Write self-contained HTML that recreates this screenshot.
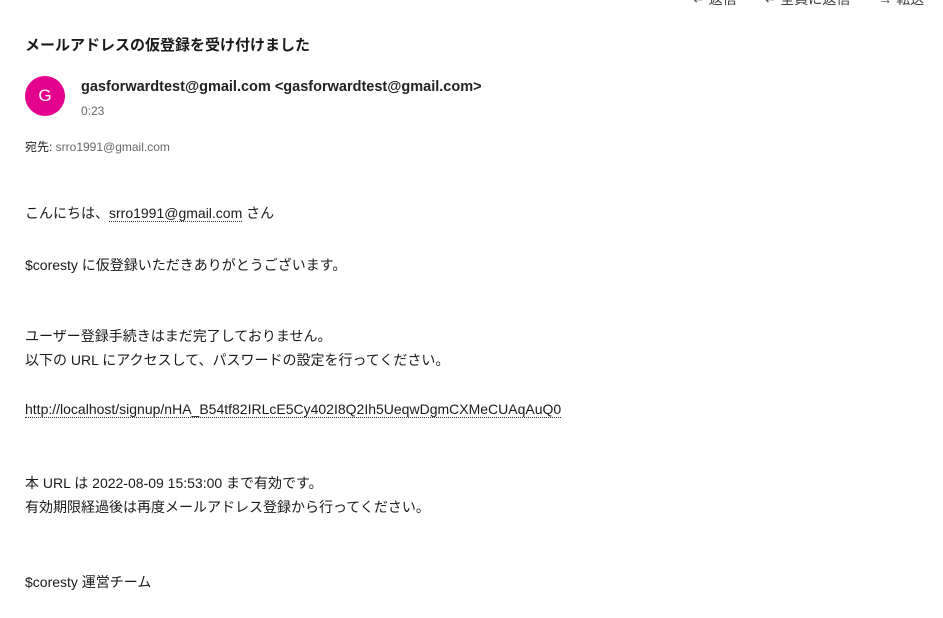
<!DOCTYPE html>
<html><head><meta charset="utf-8"><style>
body{margin:0;width:943px;height:618px;background:#fff;overflow:hidden;font-family:"Liberation Sans","Noto Sans CJK JP",sans-serif;color:#1a1a1a;position:relative}
.a{position:absolute;white-space:nowrap}
.u{border-bottom:1px dotted #333}
.b{font-size:14px}
</style></head><body>
<div class="a" style="left:693px;top:-11px;font-size:14px;color:#444">↩ 返信　　↩ 全員に返信　　→ 転送</div>
<div class="a" style="left:25px;top:34px;font-size:15px;font-weight:bold">メールアドレスの仮登録を受け付けました</div>
<div class="a" style="left:25px;top:76px;width:40px;height:40px;border-radius:50%;background:#e3008c;color:#fff;font-size:17px;line-height:40px;text-align:center">G</div>
<div class="a" style="left:81px;top:79px;font-size:14.5px;font-weight:600;color:#222">gasforwardtest@gmail.com &lt;gasforwardtest@gmail.com&gt;</div>
<div class="a" style="left:81px;top:104px;font-size:12px;color:#666">0:23</div>
<div class="a" style="left:25px;top:138px;font-size:12px;color:#222">宛先: <span style="color:#666">srro1991@gmail.com</span></div>
<div class="a b" style="left:25px;top:205px;line-height:17px">こんにちは、<span class="u">srro1991@gmail.com</span> さん</div>
<div class="a b" style="left:25px;top:255px">$coresty に仮登録いただきありがとうございます。</div>
<div class="a b" style="left:25px;top:324px;line-height:24px">ユーザー登録手続きはまだ完了しておりません。<br>以下の URL にアクセスして、パスワードの設定を行ってください。</div>
<div class="a b" style="left:25px;top:401px;line-height:17px"><span class="u">http://localhost/signup/nHA_B54tf82IRLcE5Cy402I8Q2Ih5UeqwDgmCXMeCUAqAuQ0</span></div>
<div class="a b" style="left:25px;top:471px;line-height:24px">本 URL は 2022-08-09 15:53:00 まで有効です。<br>有効期限経過後は再度メールアドレス登録から行ってください。</div>
<div class="a b" style="left:25px;top:572px">$coresty 運営チーム</div>
</body></html>
